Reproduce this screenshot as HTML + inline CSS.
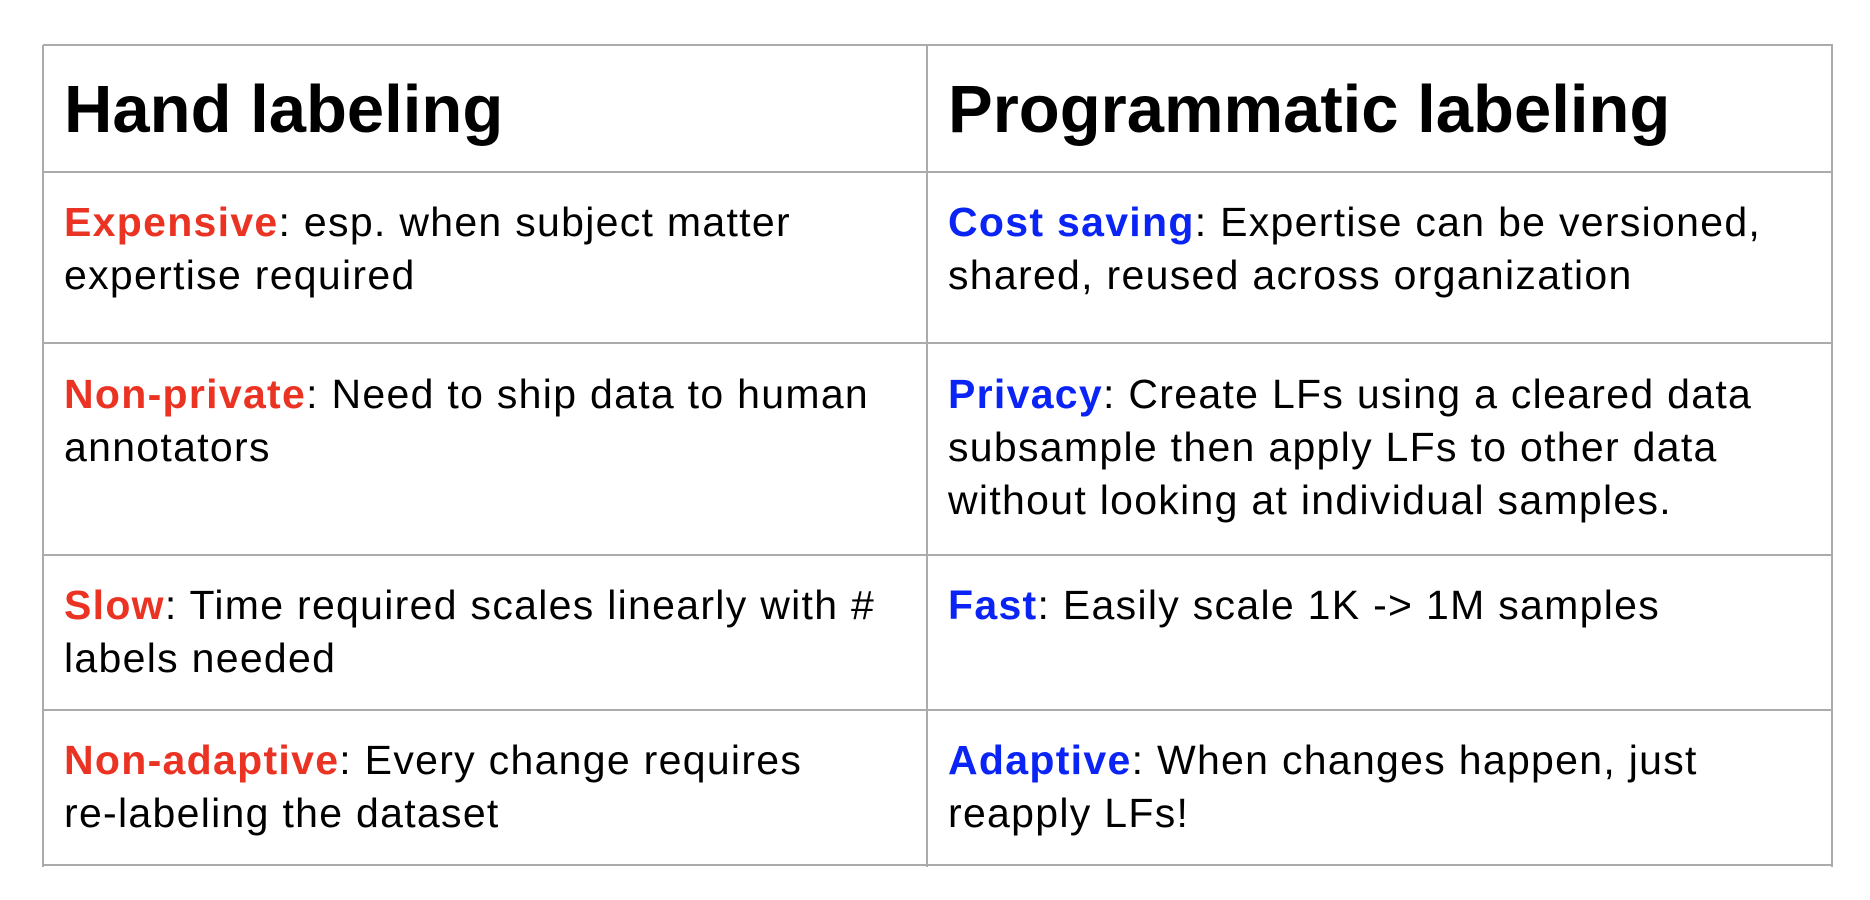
<!DOCTYPE html>
<html><head><meta charset="utf-8">
<style>
html,body{margin:0;padding:0;background:#fff;width:1870px;height:900px;overflow:hidden}
body{position:relative;font-family:"Liberation Sans",sans-serif;color:#000}
.h{position:absolute;height:2px;background:#ababab;left:43px;width:1790px}
.v{position:absolute;width:2px;background:#ababab;top:45px;height:822px}
.hd{position:absolute;font-weight:bold;font-size:67px;line-height:80px;top:70px;white-space:nowrap;letter-spacing:0px}
.c{position:absolute;font-size:41px;line-height:53px;white-space:nowrap;letter-spacing:1.3px}
.r{color:#ea3323;font-weight:bold}
.b{color:#0a24f5;font-weight:bold}
</style></head><body>
<div class="h" style="top:44px"></div>
<div class="h" style="top:171px"></div>
<div class="h" style="top:342px"></div>
<div class="h" style="top:554px"></div>
<div class="h" style="top:709px"></div>
<div class="h" style="top:864px"></div>
<div class="v" style="left:42px"></div>
<div class="v" style="left:926px"></div>
<div class="v" style="left:1831px"></div>

<div class="hd" style="left:64px">Hand labeling</div>
<div class="hd" style="left:948px">Programmatic labeling</div>

<div class="c" style="left:64px;top:196px"><span class="r">Expensive</span>: esp. when subject matter<br>expertise required</div>
<div class="c" style="left:948px;top:196px"><span class="b">Cost saving</span>: Expertise can be versioned,<br>shared, reused across organization</div>

<div class="c" style="left:64px;top:368px"><span class="r">Non-private</span>: Need to ship data to human<br>annotators</div>
<div class="c" style="left:948px;top:368px"><span class="b">Privacy</span>: Create LFs using a cleared data<br>subsample then apply LFs to other data<br>without looking at individual samples.</div>

<div class="c" style="left:64px;top:579px"><span class="r">Slow</span>: Time required scales linearly with #<br>labels needed</div>
<div class="c" style="left:948px;top:579px"><span class="b">Fast</span>: Easily scale 1K -&gt; 1M samples</div>

<div class="c" style="left:64px;top:734px"><span class="r">Non-adaptive</span>: Every change requires<br>re-labeling the dataset</div>
<div class="c" style="left:948px;top:734px"><span class="b">Adaptive</span>: When changes happen, just<br>reapply LFs!</div>
</body></html>
